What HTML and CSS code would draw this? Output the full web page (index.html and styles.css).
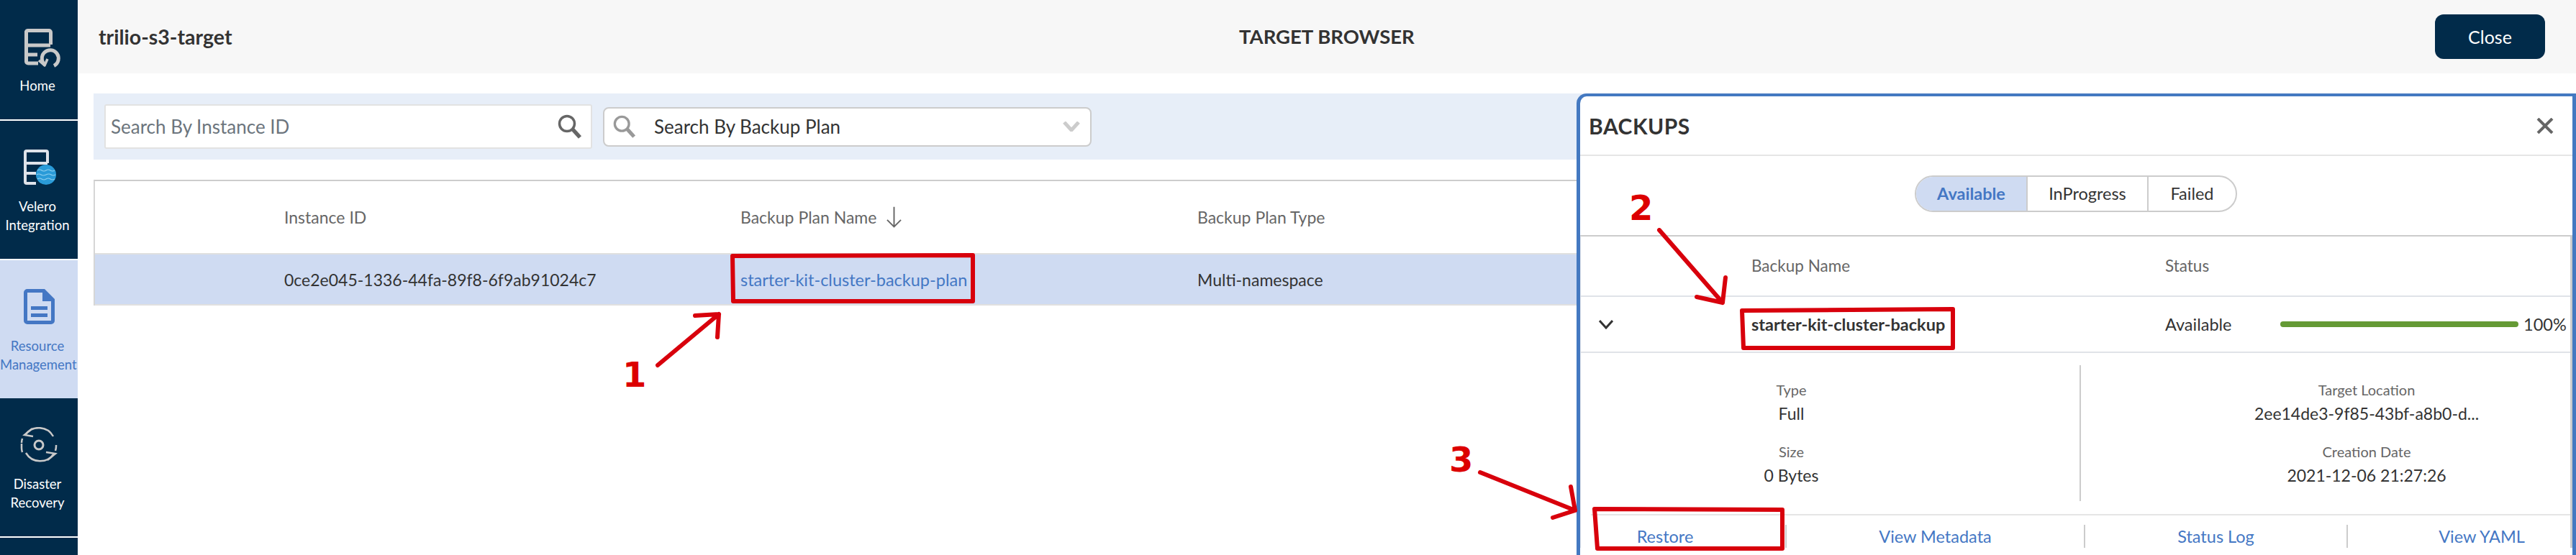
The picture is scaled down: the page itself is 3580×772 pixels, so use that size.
FILE: index.html
```html
<!DOCTYPE html>
<html lang="en">
<head>
    <meta charset="UTF-8">
    <title>Target Browser</title>
    <link rel="stylesheet" href="styles.css">
</head>
<body>
    <nav class="sidebar">
        <a class="nav-item nav-home">
            <svg class="nav-icon" viewBox="0 0 54 54" fill="none" stroke="#c9c9c9" stroke-width="5" stroke-linejoin="round">
                <path d="M20 48H6a2.500 2.500 0 0 1-2.500-2.500V4A2.500 2.500 0 0 1 6 2.500h29A2.500 2.500 0 0 1 37.500 5v17"/>
                <path d="M4 23h33M4 36h15"/>
                <path d="M30 50.500a11.500 11.500 0 1 1 12 1" stroke-width="5"/>
                <path d="M21 44l8 7 4-9" stroke-width="3.500"/>
            </svg>
            <span>Home</span>
        </a>
        <a class="nav-item">
            <svg class="nav-icon" viewBox="0 0 54 54" fill="none" stroke="#dfe3ea" stroke-width="4">
                <path d="M17 47H4a2 2 0 0 1-2-2V4a2 2 0 0 1 2-2h27a2 2 0 0 1 2 2v15M2 19h31M2 33h15"/>
                <circle cx="31" cy="35" r="14" fill="#2a9bd8" stroke="none"/>
                <path d="M19 29q3-2 6 0t6 0 6 0 6 0M18 35q3-2 6 0t7 0 7 0 6 0M19 41q3-2 6 0t6 0 6 0 6 0" stroke="#8fd0f0" stroke-width="1.200"/>
            </svg>
            <span>Velero<br>Integration</span>
        </a>
        <a class="nav-item active">
            <svg class="nav-icon" viewBox="0 0 54 54">
                <path fill="#4477c4" d="M5 0h24l14 14v30a5 5 0 0 1-5 5H5a5 5 0 0 1-5-5V5a5 5 0 0 1 5-5zM5 5v39h33V17H26V5zM10 24h23v5H10zM10 34h23v5H10z" fill-rule="evenodd"/>
            </svg>
            <span>Resource<br>Management</span>
        </a>
        <a class="nav-item nav-last">
            <svg class="nav-icon nav-icon-wide" viewBox="0 0 54 54" fill="none" stroke="#c9c9c9" stroke-width="2.500">
                <path d="M7 11A23 23 0 0 1 46 13M47 37A23 23 0 0 1 8 36M2 22a23 23 0 0 1 1-6M50 25a23 23 0 0 1-1 8M2 23v6q0 3 1 6"/>
                <path d="M17 2L6 11l12 2M38 46l11-9-13-2"/>
                <circle cx="26" cy="25" r="6" stroke-width="3"/>
            </svg>
            <span>Disaster<br>Recovery</span>
        </a>
    </nav>

    <main class="main">
        <header class="topbar">
            <div class="topbar-title">trilio-s3-target</div>
            <div class="topbar-center">TARGET BROWSER</div>
            <button class="close-button">Close</button>
        </header>

        <section class="filter-bar">
            <div class="search-input">
                <span>Search By Instance ID</span>
                <svg class="search-icon" viewBox="0 0 34 34" fill="none" stroke="#666" stroke-width="3.500">
                    <circle cx="13" cy="13" r="10.500"/>
                    <path d="M21 21l10 11" stroke-width="5.500"/>
                </svg>
            </div>
            <div class="search-select">
                <svg class="select-icon" viewBox="0 0 34 34" fill="none" stroke="#999" stroke-width="3.500">
                    <circle cx="13" cy="13" r="10.500"/>
                    <path d="M21 21l10 11" stroke-width="5.500"/>
                </svg>
                <span class="select-text">Search By Backup Plan</span>
                <svg class="select-chevron" viewBox="0 0 24 14" fill="none" stroke="#ccc" stroke-width="5">
                    <path d="M2 1l10 11L22 1"/>
                </svg>
            </div>
        </section>

        <section class="plan-table">
            <div class="plan-row plan-head">
                <div>Instance ID</div>
                <div class="sort-cell">
                    <span>Backup Plan Name</span>
                    <svg class="sort-arrow" viewBox="0 0 22 30" fill="none" stroke="#666" stroke-width="2">
                        <path d="M11 0v29M1 19l10 10 10-10"/>
                    </svg>
                </div>
                <div>Backup Plan Type</div>
            </div>
            <div class="plan-row plan-body">
                <div>0ce2e045-1336-44fa-89f8-6f9ab91024c7</div>
                <div><a class="link plan-link">starter-kit-cluster-backup-plan</a></div>
                <div>Multi-namespace</div>
            </div>
        </section>

        <aside class="backups-panel">
            <div class="panel-header">
                <div class="panel-title">BACKUPS</div>
                <svg class="panel-close" viewBox="0 0 24 22" fill="none" stroke="#666" stroke-width="4">
                    <path d="M2 1l20 20M22 1L2 21"/>
                </svg>
            </div>
            <div class="toggle-wrap">
                <div class="toggle">
                    <div class="toggle-item selected">Available</div>
                    <div class="toggle-item item-progress">InProgress</div>
                    <div class="toggle-item item-failed">Failed</div>
                </div>
            </div>
            <div class="backup-table">
                <div class="backup-row backup-head">
                    <div></div>
                    <div>Backup Name</div>
                    <div>Status</div>
                </div>
                <div class="backup-row backup-body">
                    <div class="chevron-cell">
                        <svg class="row-chevron" viewBox="0 0 20 13" fill="none" stroke="#333" stroke-width="3">
                            <path d="M1 1l9 10 9-10"/>
                        </svg>
                    </div>
                    <div class="backup-name">starter-kit-cluster-backup</div>
                    <div class="status-cell">
                        <span class="status-text">Available</span>
                        <span class="progress"></span>
                        <span class="progress-value">100%</span>
                    </div>
                </div>
                <div class="details">
                    <div class="details-col col-left">
                        <div class="detail-label">Type</div>
                        <div class="detail-value">Full</div>
                        <div class="detail-label spaced">Size</div>
                        <div class="detail-value">0 Bytes</div>
                    </div>
                    <div class="details-col col-right">
                        <div class="detail-label">Target Location</div>
                        <div class="detail-value">2ee14de3-9f85-43bf-a8b0-d...</div>
                        <div class="detail-label spaced">Creation Date</div>
                        <div class="detail-value">2021-12-06 21:27:26</div>
                    </div>
                </div>
                <div class="actions">
                    <a class="link action action-first">Restore</a>
                    <a class="link action">View Metadata</a>
                    <a class="link action">Status Log</a>
                    <a class="link action action-last">View YAML</a>
                </div>
            </div>
        </aside>
    </main>

    <!-- red markup drawn on top of the screenshot -->
    <svg class="markup" viewBox="0 0 3580 772" fill="none" stroke="#d8000c" stroke-width="6" stroke-linecap="round" stroke-linejoin="round">
        <path d="M1018 356L1352 355V419H1019z"/>
        <path d="M914 508L999 437M966 439L999 437L997 469"/>
        <path d="M2421 432L2714 430V484H2423z"/>
        <path d="M2306 320L2394 421M2358 413L2394 421L2398 386"/>
        <path d="M2216 708L2477 709V763H2220z"/>
        <path d="M2057 657L2189 710M2183 677L2189 710L2158 720"/>
    </svg>
    <span class="step-number step-1">1</span>
    <span class="step-number step-2">2</span>
    <span class="step-number step-3">3</span>
</body>
</html>
```

FILE: styles.css
```css
html, body {
    margin: 0;
    height: 772px;
    overflow: hidden;
}
body {
    display: flex;
    font-family: Lato, "Open Sans", sans-serif;
    background-color: #fff;
    color: #333;
}
svg {
    display: block;
}
.sidebar {
    width: 108px;
    flex: none;
    background-color: #012b4a;
    color: #fff;
    font-size: 18.500px;
    line-height: 26px;
    text-align: center;
}
.nav-item {
    display: block;
    box-sizing: border-box;
    height: 194px;
    padding: 40px 4px 0 0;
    border-bottom: 2px solid #fff;
}
.nav-home {
    height: 168px;
}
.nav-item.active {
    height: 192px;
    border-bottom: none;
    background-color: #cfdbf2;
    color: #4477c4;
}
.nav-icon {
    width: 54px;
    height: 54px;
    margin: 0 0 12px 33px;
}
.nav-icon-wide {
    margin-left: 28px;
}
.nav-item span {
    display: block;
    white-space: nowrap;
}
.main {
    position: relative;
    flex: 1;
    min-width: 0;
}
.topbar {
    display: flex;
    align-items: center;
    justify-content: space-between;
    height: 102px;
    padding: 0 43px 0 29px;
    background-color: #f7f7f7;
}
.topbar-title {
    font-size: 28.500px;
    font-weight: 700;
}
.topbar-center {
    position: absolute;
    left: 1614px;
    top: 36px;
    font-size: 27.500px;
    line-height: 30px;
    font-weight: 700;
}
.close-button {
    width: 153px;
    height: 62px;
    border: none;
    border-radius: 12px;
    background-color: #012b4a;
    color: #fff;
    font-family: inherit;
    font-size: 25px;
}
.filter-bar {
    display: flex;
    align-items: center;
    gap: 15px;
    height: 92px;
    margin: 28px 0 28px 22px;
    padding-left: 15px;
    background-color: #e7eef8;
}
.search-input {
    display: flex;
    align-items: center;
    justify-content: space-between;
    box-sizing: border-box;
    width: 678px;
    height: 62px;
    padding: 0 12px 0 7px;
    border: 2px solid #e2e2e2;
    border-radius: 3px;
    background-color: #fff;
    color: #6c757d;
    font-size: 26px;
}
.search-icon {
    width: 34px;
    height: 34px;
}
.search-select {
    display: flex;
    align-items: center;
    box-sizing: border-box;
    width: 679px;
    height: 55px;
    padding: 0 14px 0 12px;
    border: 2px solid #ccc;
    border-radius: 8px;
    background-color: #fff;
    font-size: 26px;
}
.select-icon {
    width: 32px;
    height: 32px;
}
.select-text {
    flex: 1;
    margin-left: 25px;
}
.select-chevron {
    width: 24px;
    height: 14px;
}
.plan-table {
    margin-left: 22px;
    border-top: 2px solid #ccc;
    border-left: 2px solid #d6d6d6;
    font-size: 23px;
}
.plan-row {
    display: grid;
    grid-template-columns: 634px 635px 1fr;
    align-items: center;
    padding-left: 263px;
}
.plan-head {
    height: 100px;
    color: #666;
}
.plan-body {
    height: 69px;
    border-top: 2px solid #e0e0e0;
    border-bottom: 2px solid #e0e0e0;
    background-color: #cfdbf2;
}
.sort-cell {
    display: flex;
    align-items: center;
    gap: 14px;
    white-space: nowrap;
}
.sort-arrow {
    width: 21px;
    height: 30px;
}
.link {
    color: #4477c4;
}
.plan-link {
    font-size: 23.500px;
}
.backups-panel {
    position: absolute;
    left: 2083px;
    top: 130px;
    right: 0;
    height: 700px;
    box-sizing: border-box;
    border: solid #4479c1;
    border-width: 4px 5px 0 5px;
    border-top-left-radius: 14px;
    background-color: #fff;
    font-size: 23.500px;
}
.panel-header {
    display: flex;
    align-items: center;
    justify-content: space-between;
    height: 81px;
    padding: 0 26px 0 12px;
    border-bottom: 2px solid #e5e5e5;
}
.panel-title {
    font-size: 30px;
    font-weight: 700;
    letter-spacing: 0.500px;
}
.panel-close {
    width: 24px;
    height: 22px;
}
.toggle-wrap {
    height: 110px;
    padding-top: 27px;
    padding-left: 465px;
    box-sizing: border-box;
}
.toggle {
    display: flex;
    box-sizing: border-box;
    width: 448px;
    height: 51px;
    border: 2px solid #ccc;
    border-radius: 26px;
    overflow: hidden;
    line-height: 47px;
    text-align: center;
}
.toggle-item {
    box-sizing: border-box;
}
.toggle-item.selected {
    width: 155px;
    border-right: 2px solid #ccc;
    background-color: #cfdbf2;
    color: #4477c4;
    font-weight: 700;
}
.item-progress {
    width: 168px;
    border-right: 2px solid #ccc;
}
.item-failed {
    flex: 1;
}
.backup-table {
    border-top: 2px solid #ccc;
    border-left: 1px solid #e0e3e8;
    border-right: 3px solid #ccc;
}
.backup-row {
    display: grid;
    grid-template-columns: 237px 575px 1fr;
    align-items: center;
}
.backup-head {
    height: 80px;
    padding-bottom: 2px;
    color: #666;
    font-size: 22.500px;
}
.backup-body {
    height: 76px;
    border-top: 2px solid #e0e3e8;
    border-bottom: 2px solid #e0e3e8;
}
.chevron-cell {
    padding-left: 25px;
}
.row-chevron {
    width: 20px;
    height: 13px;
}
.backup-name {
    font-weight: 700;
}
.status-cell {
    display: flex;
    align-items: center;
}
.status-text {
    width: 160px;
}
.progress {
    width: 331px;
    height: 8px;
    margin-right: 7px;
    border-radius: 4px;
    background-color: #659a35;
}
.details {
    display: grid;
    grid-template-columns: 695px 1fr;
    padding: 17px 0 18px;
}
.details-col {
    height: 189px;
    box-sizing: border-box;
    padding-top: 18px;
    text-align: center;
}
.col-left {
    padding-right: 108px;
    border-right: 2px solid #ccc;
}
.col-right {
    padding-left: 114px;
}
.detail-label {
    color: #666;
    font-size: 20px;
    line-height: 33px;
}
.detail-label.spaced {
    margin-top: 20px;
}
.detail-value {
    font-size: 23px;
    line-height: 33px;
}
.actions {
    display: grid;
    grid-template-columns: 272px 415px 365px 1fr;
    margin-left: 14px;
    padding-top: 13px;
    border-top: 2px solid #e5e5e5;
}
.action {
    height: 32px;
    line-height: 32px;
    text-align: center;
    border-right: 2px solid #ccc;
    box-sizing: border-box;
}
.action-first {
    padding-right: 64px;
}
.action-last {
    padding-left: 63px;
    border-right: none;
}
.markup {
    position: absolute;
    left: 0;
    top: 0;
    width: 3580px;
    height: 772px;
    pointer-events: none;
    filter: blur(0.5px);
}
.step-number {
    position: absolute;
    font-family: "DejaVu Sans", sans-serif;
    font-size: 48px;
    font-weight: 700;
    line-height: 48px;
    color: #dc0000;
}
.step-1 {
    left: 865px;
    top: 497px;
}
.step-2 {
    left: 2264px;
    top: 265px;
}
.step-3 {
    left: 2014px;
    top: 615px;
}
```
